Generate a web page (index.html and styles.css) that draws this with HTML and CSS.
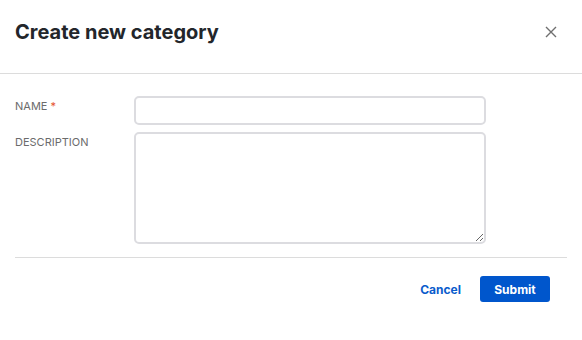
FILE: index.html
```html
<!DOCTYPE html>
<html lang="en">
<head>
  <meta charset="UTF-8" />
  <meta name="viewport" content="width=device-width, initial-scale=1.0"/>
  <title>Create new category</title>
  <link rel="stylesheet" href="styles.css">
</head>
<body>
  <div class="modal">
    <div class="modal-header">
      <h2>Create new category</h2>
      <button class="close-btn" aria-label="Close">
        <svg width="12" height="12" viewBox="0 0 12 12">
          <path d="M1 1 L11 11 M11 1 L1 11" stroke="#6f6f6f" stroke-width="1.4" fill="none"/>
        </svg>
      </button>
    </div>

    <div class="modal-body">
      <div class="form-row">
        <label>Name <span class="required">*</span></label>
        <input type="text" />
      </div>
      <div class="form-row">
        <label>Description</label>
        <textarea></textarea>
      </div>
    </div>

    <div class="modal-footer">
      <button class="btn-link">Cancel</button>
      <button class="btn">Submit</button>
    </div>
  </div>
</body>
</html>
```

FILE: styles.css
```css
    body {
      margin: 0;
      font-family: Inter, "Noto Sans", sans-serif;
      background-color: white;
    }

    .modal {
      width: 582px;
    }

    .modal-header {
      display: flex;
      align-items: center;
      justify-content: space-between;
      height: 74px;
      padding: 0 25px 9px 15px;
      border-bottom: 1px solid #dcdcdc;
      box-sizing: border-box;
    }

    .modal-header h2 {
      margin: 0;
      font-size: 20px;
      font-weight: 700;
      color: #23262b;
    }

    .close-btn {
      border: none;
      background: none;
      padding: 0;
      display: flex;
      cursor: pointer;
    }

    .modal-body {
      padding: 22px 0 13px 0;
      border-bottom: 1px solid #dcdcdc;
      margin: 0 15px;
    }

    .form-row {
      display: flex;
      align-items: flex-start;
      margin-bottom: 7px;
    }

    .form-row:last-child {
      margin-bottom: 0;
    }

    label {
      width: 119px;
      flex-shrink: 0;
      padding-top: 3px;
      font-size: 11px;
      color: #6b6b6b;
      text-transform: uppercase;
    }

    .required {
      color: #e5532d;
    }

    input, textarea {
      width: 352px;
      box-sizing: border-box;
      border: 2px solid #dcdce0;
      border-radius: 5px;
      font-family: inherit;
      font-size: 13px;
      padding: 4px 8px;
      margin: 0;
    }

    input {
      height: 29px;
    }

    textarea {
      height: 112px;
      resize: vertical;
      display: block;
    }

    .modal-footer {
      display: flex;
      justify-content: flex-end;
      align-items: center;
      gap: 19px;
      padding: 18px 32px 0 0;
    }

    .btn-link {
      border: none;
      background: none;
      padding: 0;
      color: #0a5ccc;
      font-family: inherit;
      font-weight: 700;
      font-size: 12px;
      cursor: pointer;
    }

    .btn {
      width: 70px;
      height: 26px;
      border: none;
      border-radius: 3px;
      background-color: #0056cc;
      color: white;
      font-family: inherit;
      font-weight: 700;
      font-size: 12px;
      cursor: pointer;
    }
```
